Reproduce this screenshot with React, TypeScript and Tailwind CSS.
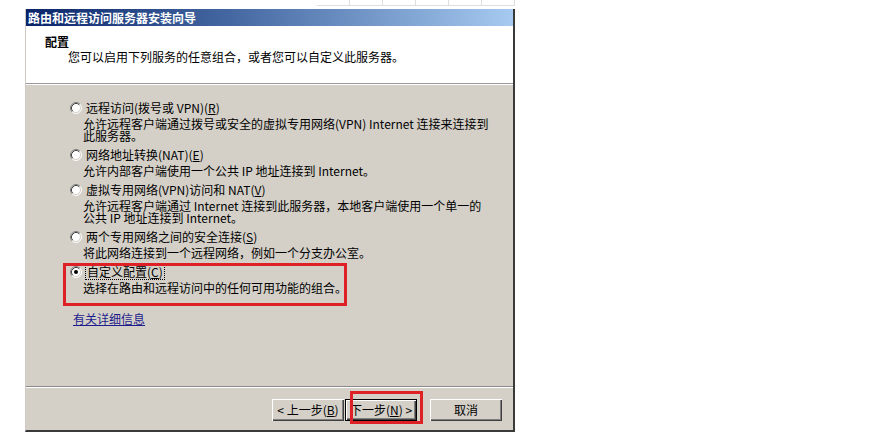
import React from "react";

const FONT = '"Noto Sans CJK SC", "Noto Sans", sans-serif';

function Radio({ checked }: { checked?: boolean }) {
  return (
    <svg width="12" height="12" viewBox="0 0 12 12" className="shrink-0">
      <circle cx="6" cy="6" r="5" fill="#ffffff" />
      <path d="M 2.11 9.89 A 5.5 5.5 0 0 1 9.89 2.11" stroke="#808080" strokeWidth="1" fill="none" />
      <path d="M 9.89 2.11 A 5.5 5.5 0 0 1 2.11 9.89" stroke="#ffffff" strokeWidth="1" fill="none" />
      <path d="M 2.82 9.18 A 4.5 4.5 0 0 1 9.18 2.82" stroke="#404040" strokeWidth="1" fill="none" />
      <path d="M 9.18 2.82 A 4.5 4.5 0 0 1 2.82 9.18" stroke="#d4d0c8" strokeWidth="1" fill="none" />
      {checked && <circle cx="6" cy="6" r="2" fill="#000000" />}
    </svg>
  );
}

function Option({
  label,
  lines,
  checked,
  focus,
}: {
  label: React.ReactNode;
  lines: string[];
  checked?: boolean;
  focus?: boolean;
}) {
  return (
    <div className="flex flex-col">
      <div className="flex items-center h-[16px]">
        <Radio checked={checked} />
        <span
          className={
            focus
              ? "ml-[3px] leading-[14px] whitespace-nowrap border border-dotted border-black px-px"
              : "ml-[4px] leading-[16px] whitespace-nowrap"
          }
        >
          {label}
        </span>
      </div>
      <div className="mt-[2px] pl-[13px] leading-[12px] whitespace-nowrap">
        {lines.map((l, i) => (
          <React.Fragment key={i}>
            {i > 0 && <br />}
            {l}
          </React.Fragment>
        ))}
      </div>
    </div>
  );
}

function Button({
  children,
  isDefault,
}: {
  children: React.ReactNode;
  isDefault?: boolean;
}) {
  if (isDefault) {
    return (
      <div className="w-[72px] h-[22px] border border-black bg-[#d4d0c8] shadow-[inset_1px_1px_#ffffff,inset_-1px_-1px_#404040,inset_-2px_-2px_#808080] flex items-center justify-center text-[12px] leading-[14px] whitespace-nowrap">
        {children}
      </div>
    );
  }
  return (
    <div className="w-[72px] h-[22px] bg-[#d4d0c8] shadow-[inset_1px_1px_#ffffff,inset_-1px_-1px_#404040,inset_-2px_-2px_#808080] flex items-center justify-center text-[12px] leading-[14px] whitespace-nowrap">
      {children}
    </div>
  );
}

export default function App() {
  const cells = [0, 1, 2, 3, 4, 5];
  return (
    <div
      className="w-[878px] h-[439px] bg-white overflow-hidden text-black text-[12px]"
      style={{ fontFamily: FONT }}
    >
      {/* faint grid remnants above the dialog */}
      <div className="flex h-[6px] ml-[317px]">
        {cells.map((c) => (
          <div key={c} className="w-[33px] h-[6px] border-r border-b border-[#dedede]" />
        ))}
      </div>

      {/* dialog */}
      <div className="ml-[25px] mt-[3px] w-[490px] flex flex-col border-l border-r-2 border-b-2 border-[#3a3a3a] border-l-[#cfcbc3]">
        {/* title bar */}
        <div className="h-[17px] bg-linear-to-r from-[#0a246a] to-[#a6caf0] flex items-center pl-[2px]">
          <span className="text-white font-bold text-[12px] leading-[15px] whitespace-nowrap">
            路由和远程访问服务器安装向导
          </span>
        </div>

        {/* header */}
        <div className="h-[57px] bg-white pt-[9px] pl-[19px] flex flex-col">
          <div className="font-bold leading-[14px]">配置</div>
          <div className="pl-[23px] mt-[1px] leading-[14px] whitespace-nowrap">
            您可以启用下列服务的任意组合，或者您可以自定义此服务器。
          </div>
        </div>
        <div className="h-px bg-[#9a9a9a]" />
        <div className="h-px bg-white" />

        {/* body */}
        <div className="relative h-[301px] bg-[#d4d0c8] pt-[15px] pl-[44px] flex flex-col gap-[5px]">
          <Option
            label={
              <>
                远程访问(拨号或 VPN)(<u>R</u>)
              </>
            }
            lines={[
              "允许远程客户端通过拨号或安全的虚拟专用网络(VPN) Internet 连接来连接到",
              "此服务器。",
            ]}
          />
          <Option
            label={
              <>
                网络地址转换(NAT)(<u>E</u>)
              </>
            }
            lines={["允许内部客户端使用一个公共 IP 地址连接到 Internet。"]}
          />
          <Option
            label={
              <>
                虚拟专用网络(VPN)访问和 NAT(<u>V</u>)
              </>
            }
            lines={[
              "允许远程客户端通过 Internet 连接到此服务器，本地客户端使用一个单一的",
              "公共 IP 地址连接到 Internet。",
            ]}
          />
          <Option
            label={
              <>
                两个专用网络之间的安全连接(<u>S</u>)
              </>
            }
            lines={["将此网络连接到一个远程网络，例如一个分支办公室。"]}
          />
          <Option
            checked
            focus
            label={
              <>
                自定义配置(<u>C</u>)
              </>
            }
            lines={["选择在路由和远程访问中的任何可用功能的组合。"]}
          />
          <div className="pl-[3px] mt-[12px] leading-[16px]">
            <span className="underline text-[#1c1c8c] whitespace-nowrap">有关详细信息</span>
          </div>

          {/* red highlight around custom configuration */}
          <div className="absolute left-[37px] top-[178px] w-[284px] h-[43px] border-[3px] border-[#de2127]" />
        </div>

        <div className="h-px bg-[#8a8a8a]" />
        <div className="h-px bg-white" />

        {/* footer */}
        <div className="relative h-[42px] bg-[#d4d0c8] pt-[11px] pr-[11px] flex justify-end items-start">
          <Button>&lt; 上一步(<u>B</u>)</Button>
          <div className="ml-[1px]">
            <Button isDefault>下一步(<u>N</u>) &gt;</Button>
          </div>
          <div className="ml-[13px]">
            <Button>取消</Button>
          </div>
          <div className="absolute left-[324px] top-[3px] w-[73px] h-[33px] border-[3px] border-[#de2127]" />
        </div>
      </div>
    </div>
  );
}
